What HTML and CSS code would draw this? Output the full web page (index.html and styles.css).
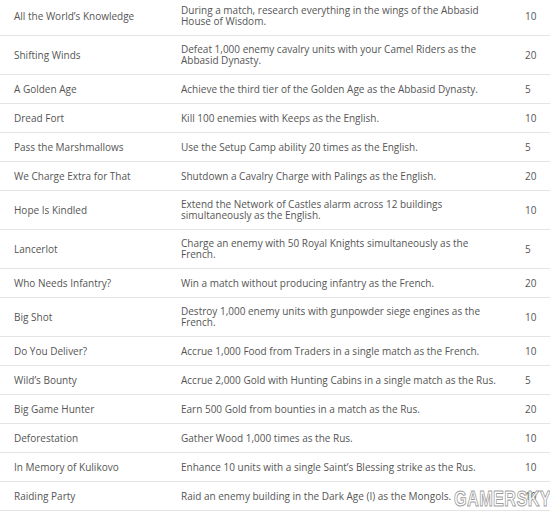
FILE: index.html
```
<!DOCTYPE html>
<html>
<head>
<meta charset="utf-8">
<link rel="stylesheet" href="styles.css">
</head>
<body>
<div class="page">
  <div class="table">
    <div class="row"><div class="cell name">All the World’s Knowledge</div><div class="cell desc"><span>During a match, research everything in the wings of the Abbasid<br>House of Wisdom.</span></div><div class="cell pts">10</div></div>
    <div class="row"><div class="cell name">Shifting Winds</div><div class="cell desc"><span>Defeat 1,000 enemy cavalry units with your Camel Riders as the<br>Abbasid Dynasty.</span></div><div class="cell pts">20</div></div>
    <div class="row"><div class="cell name">A Golden Age</div><div class="cell desc"><span>Achieve the third tier of the Golden Age as the Abbasid Dynasty.</span></div><div class="cell pts">5</div></div>
    <div class="row"><div class="cell name">Dread Fort</div><div class="cell desc"><span>Kill 100 enemies with Keeps as the English.</span></div><div class="cell pts">10</div></div>
    <div class="row"><div class="cell name">Pass the Marshmallows</div><div class="cell desc"><span>Use the Setup Camp ability 20 times as the English.</span></div><div class="cell pts">5</div></div>
    <div class="row"><div class="cell name">We Charge Extra for That</div><div class="cell desc"><span>Shutdown a Cavalry Charge with Palings as the English.</span></div><div class="cell pts">20</div></div>
    <div class="row"><div class="cell name">Hope Is Kindled</div><div class="cell desc"><span>Extend the Network of Castles alarm across 12 buildings<br>simultaneously as the English.</span></div><div class="cell pts">10</div></div>
    <div class="row"><div class="cell name">Lancerlot</div><div class="cell desc"><span>Charge an enemy with 50 Royal Knights simultaneously as the<br>French.</span></div><div class="cell pts">5</div></div>
    <div class="row"><div class="cell name">Who Needs Infantry?</div><div class="cell desc"><span>Win a match without producing infantry as the French.</span></div><div class="cell pts">20</div></div>
    <div class="row"><div class="cell name">Big Shot</div><div class="cell desc"><span>Destroy 1,000 enemy units with gunpowder siege engines as the<br>French.</span></div><div class="cell pts">10</div></div>
    <div class="row"><div class="cell name">Do You Deliver?</div><div class="cell desc"><span>Accrue 1,000 Food from Traders in a single match as the French.</span></div><div class="cell pts">10</div></div>
    <div class="row"><div class="cell name">Wild’s Bounty</div><div class="cell desc"><span>Accrue 2,000 Gold with Hunting Cabins in a single match as the Rus.</span></div><div class="cell pts">5</div></div>
    <div class="row"><div class="cell name">Big Game Hunter</div><div class="cell desc"><span>Earn 500 Gold from bounties in a match as the Rus.</span></div><div class="cell pts">20</div></div>
    <div class="row"><div class="cell name">Deforestation</div><div class="cell desc"><span>Gather Wood 1,000 times as the Rus.</span></div><div class="cell pts">10</div></div>
    <div class="row"><div class="cell name">In Memory of Kulikovo</div><div class="cell desc"><span>Enhance 10 units with a single Saint’s Blessing strike as the Rus.</span></div><div class="cell pts">10</div></div>
    <div class="row"><div class="cell name">Raiding Party</div><div class="cell desc"><span>Raid an enemy building in the Dark Age (I) as the Mongols.</span></div><div class="cell pts">10</div></div>
  </div>
  <div class="watermark">GAMERSKY</div>
</div>
</body>
</html>
```

FILE: styles.css
```
html, body {
  margin: 0;
  padding: 0;
  background: #ffffff;
}
.page {
  position: relative;
  width: 550px;
  height: 514px;
  overflow: hidden;
  font-family: "Open Sans", "Noto Sans", sans-serif;
  font-size: 10px;
  color: #555555;
}
.table {
  margin-top: -3px;
}
.row {
  display: grid;
  grid-template-columns: 167px 344px 1fr;
  min-height: 28px;
  border-bottom: 1px solid #e4e4e4;
}
.cell {
  padding: 8px 0 8px 14px;
  line-height: 11px;
  white-space: nowrap;
  display: flex;
  align-items: center;
}
.watermark {
  position: absolute;
  left: 454px;
  top: 488px;
  font-family: "Liberation Sans", sans-serif;
  font-weight: bold;
  font-size: 22px;
  line-height: 1;
  letter-spacing: 0.5px;
  color: rgba(255, 255, 255, 0.9);
  -webkit-text-stroke: 1px rgba(140, 140, 140, 0.85);
  transform: scaleX(0.74);
  transform-origin: left top;
}
```
